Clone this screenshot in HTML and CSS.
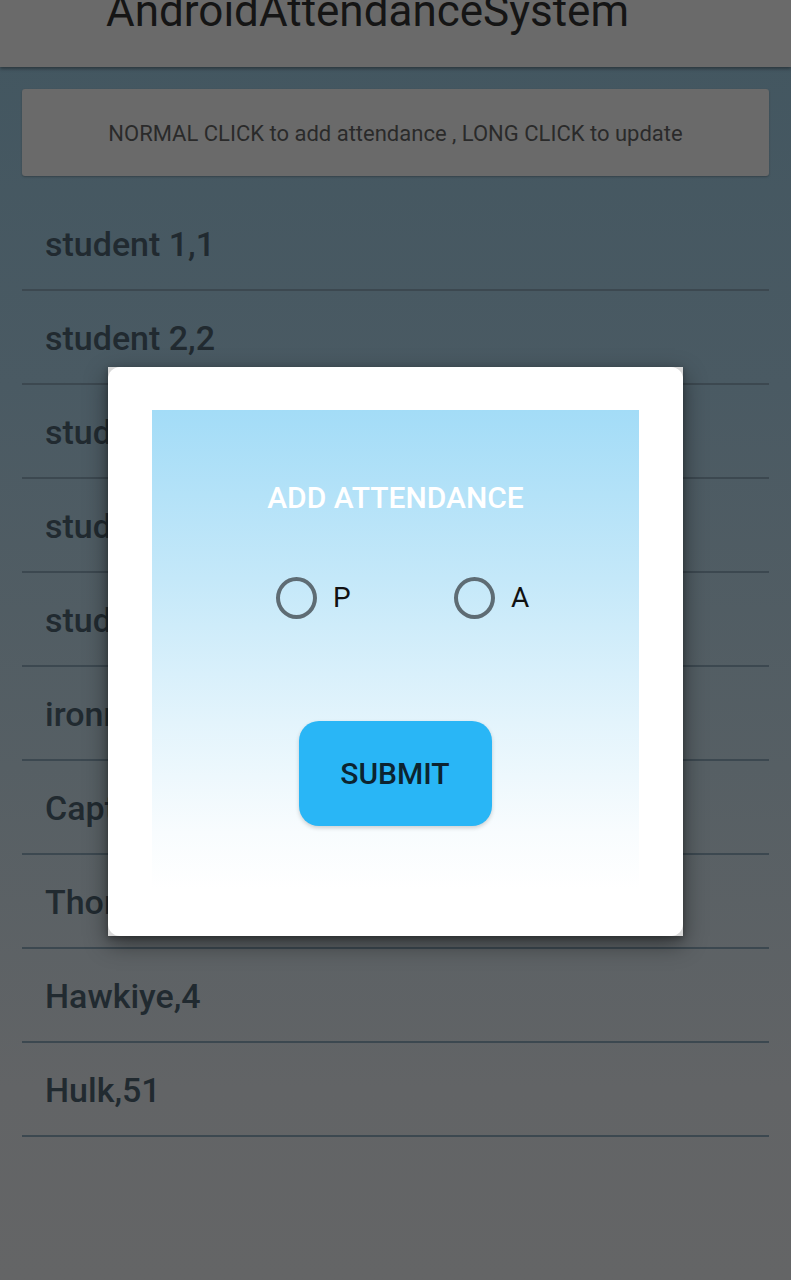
FILE: index.html
```html
<!DOCTYPE html>
<html>
<head>
<meta charset="utf-8">
<link rel="stylesheet" href="styles.css">
</head>
<body>
<div class="screen">
  <header class="appbar"><h1 class="title">AndroidAttendanceSystem</h1></header>
  <div class="hint">NORMAL CLICK to add attendance , LONG CLICK to update</div>
  <ul class="list">
    <li class="row">student 1,1</li>
    <li class="row">student 2,2</li>
    <li class="row">student 3,3</li>
    <li class="row">student 4,4</li>
    <li class="row">student 5,5</li>
    <li class="row">ironman,6</li>
    <li class="row">Captain,7</li>
    <li class="row">Thor,8</li>
    <li class="row">Hawkiye,4</li>
    <li class="row">Hulk,51</li>
  </ul>

  <div class="dialog">
    <div class="dialog-inner">
      <div class="panel">
        <div class="heading">ADD ATTENDANCE</div>
        <div class="radios">
          <label class="radio radio-p"><span class="circle"></span><span class="rlabel">P</span></label>
          <label class="radio"><span class="circle"></span><span class="rlabel">A</span></label>
        </div>
        <div class="btn-wrap"><button class="submit">SUBMIT</button></div>
      </div>
    </div>
  </div>
</div>
</body>
</html>
```

FILE: styles.css
```css
* { box-sizing: border-box; }
html, body { margin: 0; padding: 0; }
body {
  width: 791px;
  height: 1280px;
  overflow: hidden;
  font-family: Roboto, "Noto Sans", sans-serif;
}
.screen {
  position: relative;
  width: 791px;
  height: 1280px;
  background: linear-gradient(180deg, #425660 0%, #4a5a63 30%, #565f64 60%, #626466 85%, #646566 100%);
  overflow: hidden;
}
.appbar {
  height: 67px;
  background: #6a6a6a;
  box-shadow: 0 2px 3px rgba(0,0,0,0.35);
  overflow: hidden;
  position: relative;
}
.title {
  margin: 0;
  padding-left: 106px;
  font-size: 44px;
  font-weight: 400;
  line-height: 44px;
  margin-top: -11px;
  color: #151515;
}
.hint {
  margin: 22px 22px 0;
  height: 87px;
  background: #6a6a6a;
  border-radius: 3px;
  box-shadow: 0 1px 2px rgba(0,0,0,0.25);
  display: flex;
  align-items: center;
  justify-content: center;
  font-size: 22px;
  color: #2a2a2a;
  padding-top: 2px;
}
.list {
  list-style: none;
  margin: 21px 22px 0;
  padding: 0;
}
.row {
  height: 94px;
  border-bottom: 2px solid #3c4850;
  padding-left: 23px;
  display: flex;
  align-items: center;
  font-size: 34px;
  font-weight: 500;
  color: #212a30;
  padding-top: 2px;
}
.dialog {
  position: absolute;
  left: 108px;
  top: 367px;
  width: 575px;
  height: 569px;
  background: #d9d9d9;
  box-shadow: 0 8px 22px rgba(0,0,0,0.45), 0 2px 6px rgba(0,0,0,0.3);
}
.dialog-inner {
  width: 100%;
  height: 100%;
  background: #ffffff;
  border-radius: 12px;
  padding: 43px 44px 0;
}
.panel {
  height: 480px;
  background: linear-gradient(180deg, #a3dcf7 0%, #c4e8f9 35%, #e3f4fc 65%, #f8fcfe 88%, #ffffff 100%);
  padding-top: 70px;
}
.heading {
  text-align: center;
  color: #ffffff;
  font-size: 30px;
  font-weight: 500;
  line-height: 36px;
}
.radios {
  display: flex;
  align-items: center;
  margin-top: 62px;
  padding-left: 124px;
  height: 40px;
}
.radio {
  display: flex;
  align-items: center;
}
.radio-p { width: 178px; }
.circle {
  width: 41px;
  height: 42px;
  border: 4px solid #5e6c74;
  border-radius: 50%;
}
.rlabel {
  margin-left: 16px;
  font-size: 28px;
  color: #111111;
  line-height: 40px;
}
.btn-wrap {
  display: flex;
  justify-content: center;
  margin-top: 103px;
  padding-right: 1px;
}
.submit {
  width: 193px;
  height: 105px;
  border: none;
  border-radius: 20px;
  background: #29b6f6;
  color: #0c2430;
  font-family: Roboto, "Noto Sans", sans-serif;
  font-size: 30px;
  font-weight: 500;
  box-shadow: 0 2px 4px rgba(0,0,0,0.18);
  padding: 0;
}
```
